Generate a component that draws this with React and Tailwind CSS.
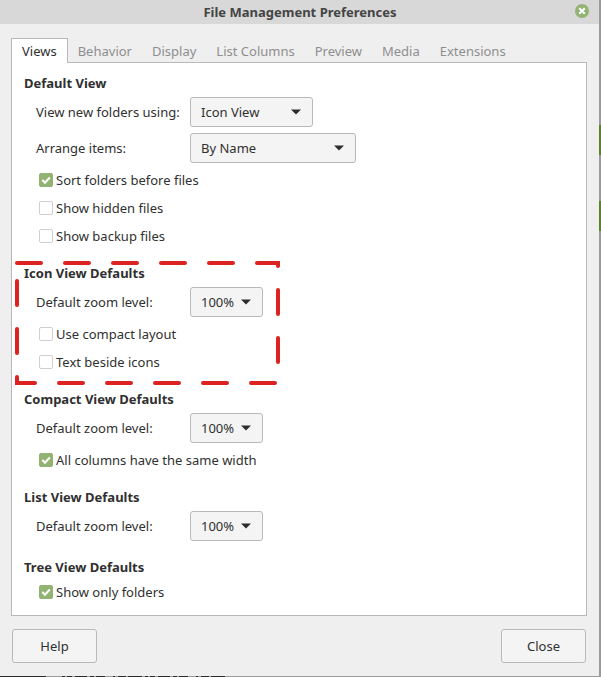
import React, { useState } from 'react';
import clsx from 'clsx';

const tabs = ['Views', 'Behavior', 'Display', 'List Columns', 'Preview', 'Media', 'Extensions'];

const zoomLevels = ['33%', '50%', '66%', '100%', '150%', '200%', '400%'];

const Section = ({ title, children }) => (
  <section className="relative">
    <h2 className="h-5 leading-5 font-bold">{title}</h2>
    {children}
  </section>
);

const SelectRow = ({ id, label, width, value, options }) => (
  <div className="flex items-center pl-3">
    <label htmlFor={id} className="w-[154px] shrink-0">
      {label}
    </label>
    <div className={clsx('relative', width)}>
      <select
        id={id}
        defaultValue={value}
        className="block h-[30px] w-full appearance-none rounded-[3px] border border-[#b9b9b9] bg-[#f4f4f4] pl-2.5 outline-none"
      >
        {options.map(option => (
          <option key={option}>{option}</option>
        ))}
      </select>
      <svg
        viewBox="0 0 10 5"
        className="pointer-events-none absolute top-3 right-3 h-[6px] w-[10px] fill-[#2d2d2d]"
      >
        <path d="M0 0h10L5 5z" />
      </svg>
    </div>
  </div>
);

const CheckRow = ({ label, checked = false }) => (
  <label className="flex h-7 items-center pl-[15px]">
    <input
      type="checkbox"
      defaultChecked={checked}
      className="peer h-3.5 w-3.5 appearance-none rounded-[2px] border border-[#cfcfcf] bg-white checked:border-[#92b372] checked:bg-[#92b372]"
    />
    <svg
      viewBox="0 0 14 14"
      className="pointer-events-none invisible -ml-3.5 h-3.5 w-3.5 fill-none stroke-white stroke-2 peer-checked:visible"
    >
      <path d="M3.3 7l2.6 2.7 4.9-5.2" />
    </svg>
    <span className="pl-[3px]">{label}</span>
  </label>
);

const Highlight = () => (
  <svg className="pointer-events-none absolute -top-1 -left-3 h-32 w-[268px]">
    <rect
      x="5"
      y="4"
      width="261"
      height="120"
      fill="none"
      stroke="#dd2222"
      strokeWidth="4"
      strokeLinecap="round"
      strokeDasharray="24 24"
    />
  </svg>
);

const DialogButton = ({ children }) => (
  <button
    type="button"
    className="h-[34px] w-[85px] rounded-[3px] border border-[#b9b9b9] bg-[#f4f4f4]"
  >
    {children}
  </button>
);

const App = () => {
  const [active, setActive] = useState('Views');

  return (
    <div className="grid min-h-screen grid-cols-[1fr_2px] grid-rows-[1fr_1px] bg-[#9b9b9b] font-['Noto_Sans','Open_Sans',sans-serif] text-[13px] leading-5 text-[#303030]">
      <main className="flex flex-col bg-[#efefef]">
        <header className="flex h-6 items-start bg-[#d8d8d8] pr-2.5 pl-[25px]">
          <h1 className="flex-1 pt-0.5 text-center font-bold text-[#444444]">
            File Management Preferences
          </h1>
          <button
            type="button"
            aria-label="Close window"
            className="mt-1 flex h-3.5 w-3.5 items-center justify-center rounded-full bg-[#92b372]"
          >
            <svg viewBox="0 0 8 8" className="h-2 w-2 stroke-white stroke-2">
              <path d="M1.2 1.2l5.6 5.6M6.8 1.2L1.2 6.8" />
            </svg>
          </button>
        </header>

        <div className="flex flex-1 flex-col pt-3.5 pr-3 pb-[13px] pl-[11px]">
          <div role="tablist" className="relative z-10 -mb-px flex">
            {tabs.map(tab => (
              <button
                key={tab}
                type="button"
                role="tab"
                aria-selected={tab === active}
                onClick={() => setActive(tab)}
                className={clsx(
                  'h-[25px] border border-b-0',
                  tab === active
                    ? 'border-[#b9b9b9] bg-white px-2.5'
                    : 'border-transparent px-[9px] text-[#8e8e8e]'
                )}
              >
                {tab}
              </button>
            ))}
          </div>

          <div
            role="tabpanel"
            className="flex flex-1 flex-col gap-[13px] border border-[#b9b9b9] bg-white px-3 pt-2.5 pb-2"
          >
            <Section title="Default View">
              <div className="flex flex-col gap-1.5 pt-1 pb-[3px]">
                <SelectRow
                  id="folder-view"
                  label="View new folders using:"
                  width="w-[123px]"
                  value="Icon View"
                  options={['Icon View', 'List View', 'Compact View']}
                />
                <SelectRow
                  id="arrange"
                  label="Arrange items:"
                  width="w-[166px]"
                  value="By Name"
                  options={['Manually', 'By Name', 'By Size', 'By Type', 'By Modification Date']}
                />
              </div>
              <CheckRow label="Sort folders before files" checked />
              <CheckRow label="Show hidden files" />
              <CheckRow label="Show backup files" />
            </Section>

            <Section title="Icon View Defaults">
              <div className="pt-1 pb-[3px]">
                <SelectRow
                  id="icon-zoom"
                  label="Default zoom level:"
                  width="w-[73px]"
                  value="100%"
                  options={zoomLevels}
                />
              </div>
              <CheckRow label="Use compact layout" />
              <CheckRow label="Text beside icons" />
              <Highlight />
            </Section>

            <Section title="Compact View Defaults">
              <div className="pt-1 pb-[3px]">
                <SelectRow
                  id="compact-zoom"
                  label="Default zoom level:"
                  width="w-[73px]"
                  value="100%"
                  options={zoomLevels}
                />
              </div>
              <CheckRow label="All columns have the same width" checked />
            </Section>

            <Section title="List View Defaults">
              <div className="pt-1 pb-[3px]">
                <SelectRow
                  id="list-zoom"
                  label="Default zoom level:"
                  width="w-[73px]"
                  value="100%"
                  options={zoomLevels}
                />
              </div>
            </Section>

            <Section title="Tree View Defaults">
              <div className="pt-px">
                <CheckRow label="Show only folders" checked />
              </div>
            </Section>
          </div>

          <footer className="flex justify-between px-px pt-[13px]">
            <DialogButton>Help</DialogButton>
            <DialogButton>Close</DialogButton>
          </footer>
        </div>
      </main>

      {/* desktop showing past the window edges */}
      <div className="flex flex-col">
        <div className="h-[125px]" />
        <div className="h-[30px] bg-[#5d7f32]" />
        <div className="h-[46px]" />
        <div className="h-[30px] bg-[#5d7f32]" />
      </div>
      <div className="flex gap-4">
        <div className="w-[46px] bg-[#2b2b2b]" />
        <svg className="h-px w-[166px]">
          <path
            d="M0 .5h166"
            stroke="#2b2b2b"
            strokeDasharray="3 2 5 3 12 3 4 2 9 8 2 3 8 2 14 3"
          />
        </svg>
      </div>
    </div>
  );
};

export default App;
